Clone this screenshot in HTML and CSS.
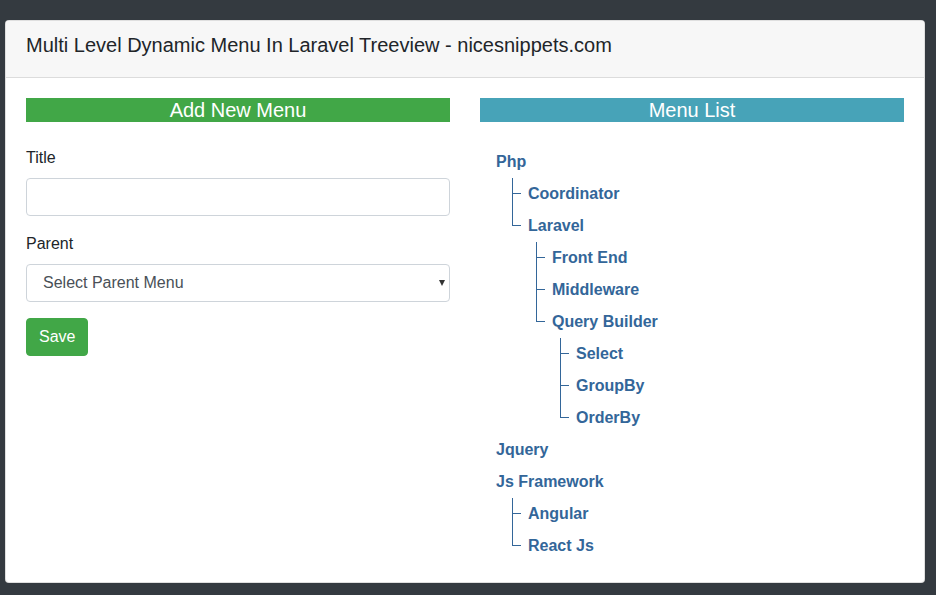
FILE: index.html
```
<!DOCTYPE html>
<html lang="en">
<head>
<meta charset="utf-8">
<title>Multi Level Dynamic Menu In Laravel Treeview</title>
<link rel="stylesheet" href="styles.css">
</head>
<body>
<div class="card">
  <div class="card-header">
    <h4 class="card-title">Multi Level Dynamic Menu In Laravel Treeview - nicesnippets.com</h4>
  </div>
  <div class="card-body">
    <div class="row">
      <div class="col">
        <h3 class="bar bar-green">Add New Menu</h3>
        <form class="form">
          <div class="form-group">
            <label class="label">Title</label>
            <input class="form-control" type="text">
          </div>
          <div class="form-group">
            <label class="label">Parent</label>
            <div class="select-wrap">
              <select class="form-control select">
                <option>Select Parent Menu</option>
              </select>
            </div>
          </div>
          <button class="btn" type="button">Save</button>
        </form>
      </div>
      <div class="col">
        <h3 class="bar bar-blue">Menu List</h3>
        <ul class="tree">
          <li>Php
            <ul>
              <li>Coordinator</li>
              <li>Laravel
                <ul>
                  <li>Front End</li>
                  <li>Middleware</li>
                  <li>Query Builder
                    <ul>
                      <li>Select</li>
                      <li>GroupBy</li>
                      <li>OrderBy</li>
                    </ul>
                  </li>
                </ul>
              </li>
            </ul>
          </li>
          <li>Jquery</li>
          <li>Js Framework
            <ul>
              <li>Angular</li>
              <li>React Js</li>
            </ul>
          </li>
        </ul>
      </div>
    </div>
  </div>
</div>
</body>
</html>
```

FILE: styles.css
```
* { box-sizing: border-box; }
html, body { margin: 0; padding: 0; }
body {
  background: #343a40;
  font-family: "Liberation Sans", Arial, sans-serif;
  font-size: 16px;
  line-height: 1.5;
  color: #212529;
  padding: 20px 11px 0 5px;
}
.card {
  background: #fff;
  border: 1px solid rgba(0,0,0,.125);
  border-radius: 4px;
  overflow: hidden;
}
.card-header {
  background: #f7f7f7;
  border-bottom: 1px solid #dcdcdc;
  padding: 12px 20px;
}
.card-title {
  margin: 0 0 8px 0;
  font-size: 20px;
  font-weight: 400;
  line-height: 1.2;
  color: #212529;
}
.card-body { padding: 20px; }
.row { display: flex; margin: 0 -15px; }
.col { flex: 1 1 0; padding: 0 15px; min-width: 0; }
.bar {
  margin: 0 0 24px 0;
  font-size: 20px;
  font-weight: 400;
  line-height: 24px;
  color: #fff;
  text-align: center;
}
.bar-green { background: #41a747; }
.bar-blue { background: #47a3b8; }
.form { margin: 0; }
.form-group { margin-bottom: 16px; }
.label { display: block; margin-bottom: 8px; line-height: 24px; }
.form-control {
  display: block;
  width: 100%;
  height: 38px;
  padding: 6px 12px;
  font-family: inherit;
  font-size: 16px;
  line-height: 1.5;
  color: #495057;
  background: #fff;
  border: 1px solid #ced4da;
  border-radius: 4px;
  margin: 0;
}
.select-wrap { position: relative; }
.select {
  -webkit-appearance: none;
  appearance: none;
  padding-left: 16px;
}
.select-wrap::after {
  content: "";
  position: absolute;
  right: 5px;
  top: 16px;
  border-left: 3.5px solid transparent;
  border-right: 3.5px solid transparent;
  border-top: 6px solid #333;
  pointer-events: none;
}
.btn {
  display: inline-block;
  font-family: inherit;
  font-size: 16px;
  line-height: 1.5;
  padding: 6px 12px;
  color: #fff;
  background: #41a747;
  border: 1px solid #41a747;
  border-radius: 4px;
  height: 38px;
}
.tree, .tree ul { margin: 0; padding: 0; list-style: none; }
.tree ul { margin-left: 16px; position: relative; }
.tree ul ul { margin-left: 8px; }
.tree ul::before {
  content: "";
  display: block;
  width: 0;
  position: absolute;
  top: 0;
  bottom: 0;
  left: 0;
  border-left: 1px solid;
}
.tree li {
  margin: 0;
  padding: 0 16px;
  line-height: 32px;
  color: #369;
  font-weight: 700;
  position: relative;
}
.tree ul li::before {
  content: "";
  display: block;
  width: 9px;
  height: 0;
  border-top: 1px solid;
  margin-top: -1px;
  position: absolute;
  top: 16px;
  left: 0;
}
.tree ul li:last-child::before {
  background: #fff;
  height: auto;
  top: 16px;
  bottom: 0;
}
```
